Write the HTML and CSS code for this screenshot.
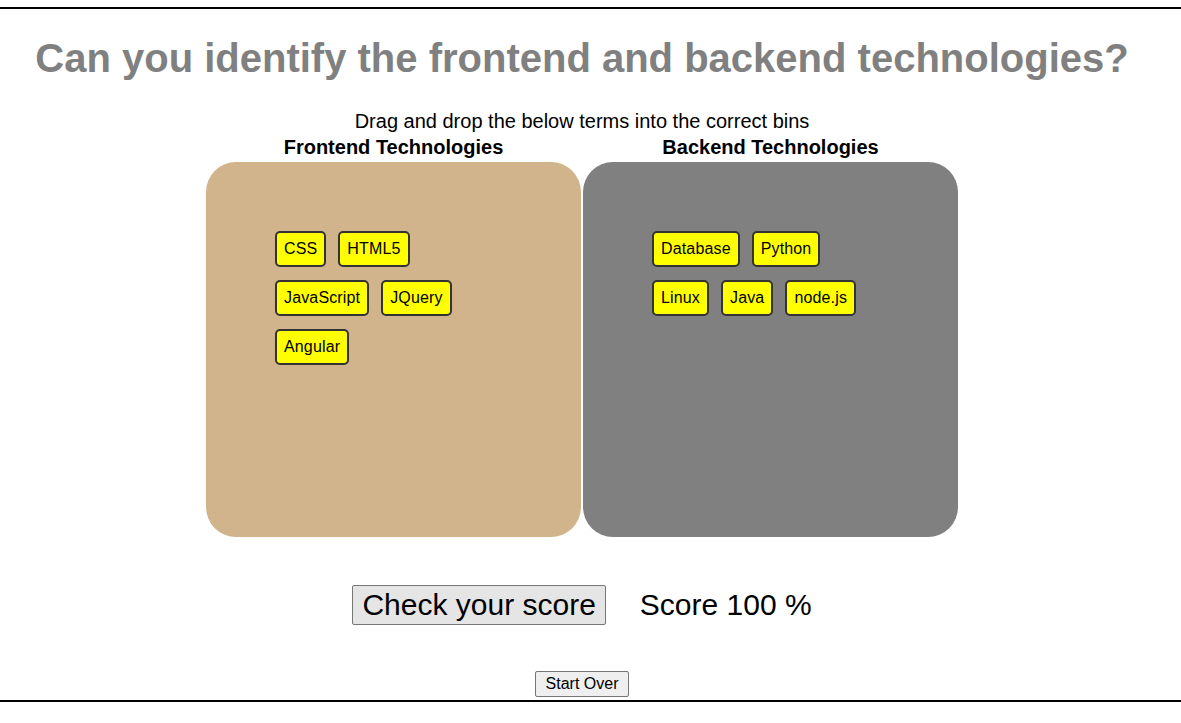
FILE: index.html
```html
<!DOCTYPE html>
<html lang="en">
<head>
<meta charset="utf-8">
<title>Frontend and Backend</title>
<link rel="stylesheet" href="styles.css">
</head>
<body>
<div class="rule rule-top"></div>
<main class="page">
  <h1 class="title">Can you identify the frontend and backend technologies?</h1>
  <p class="instructions">Drag and drop the below terms into the correct bins</p>
  <div class="bins">
    <section class="bin-col">
      <h2 class="bin-label">Frontend Technologies</h2>
      <div class="bin bin-front">
        <span class="tile">CSS</span>
        <span class="tile">HTML5</span>
        <span class="tile">JavaScript</span>
        <span class="tile">JQuery</span>
        <span class="tile">Angular</span>
      </div>
    </section>
    <section class="bin-col">
      <h2 class="bin-label">Backend Technologies</h2>
      <div class="bin bin-back">
        <span class="tile">Database</span>
        <span class="tile">Python</span>
        <span class="tile">Linux</span>
        <span class="tile">Java</span>
        <span class="tile">node.js</span>
      </div>
    </section>
  </div>
  <div class="score-row">
    <button class="check-btn" type="button">Check your score</button>
    <span class="score">Score 100 %</span>
  </div>
  <div class="restart-row">
    <button class="restart-btn" type="button">Start Over</button>
  </div>
</main>
<div class="rule rule-bottom"></div>
</body>
</html>
```

FILE: styles.css
```css
html, body {
  margin: 0;
  padding: 0;
  background: #ffffff;
}

body {
  font-family: "Liberation Sans", Arial, sans-serif;
  color: #000;
}

.rule {
  height: 2px;
  background: #000;
  width: 100%;
}

.rule-top {
  margin-top: 7px;
}

.page {
  width: 1164px;
  display: flex;
  flex-direction: column;
  align-items: center;
}

.title {
  margin: 26px 0 0;
  font-size: 40px;
  font-weight: bold;
  line-height: 46px;
  color: #808080;
  white-space: nowrap;
}

.instructions {
  margin: 29px 0 0;
  font-size: 20px;
  line-height: 23px;
}

.bins {
  display: flex;
  gap: 2px;
  margin-top: 3px;
}

.bin-col {
  display: flex;
  flex-direction: column;
  align-items: center;
}

.bin-label {
  margin: 0 0 3px;
  font-size: 20px;
  line-height: 23px;
  font-weight: bold;
}

.bin {
  width: 375px;
  height: 375px;
  box-sizing: border-box;
  border-radius: 30px;
  padding: 69px;
  display: flex;
  flex-wrap: wrap;
  align-content: flex-start;
  gap: 13px 12px;
}

.bin-front {
  background: #d2b48c;
  padding-right: 100px;
}

.bin-back {
  background: #808080;
  padding-right: 90px;
}

.tile {
  display: inline-block;
  background: #ffff00;
  border: 2px solid #333;
  border-radius: 5px;
  padding: 7px 7px;
  font-size: 16px;
  line-height: 18px;
  letter-spacing: 0.15px;
  color: #000;
}

.score-row {
  display: flex;
  align-items: center;
  gap: 34px;
  margin-top: 48px;
}

.check-btn {
  font-family: "Liberation Sans", Arial, sans-serif;
  font-size: 30px;
  line-height: 34px;
  padding: 2px 9px;
  background: #e5e5e5;
  border: 1px solid #767676;
  border-radius: 2px;
  color: #000;
  height: 40px;
}

.score {
  font-size: 30px;
  line-height: 34px;
}

.restart-row {
  margin-top: 46px;
  margin-bottom: 3px;
}

.restart-btn {
  font-family: "Liberation Sans", Arial, sans-serif;
  font-size: 16px;
  line-height: 18px;
  padding: 3px 10px;
  background: #efefef;
  border: 1px solid #767676;
  border-radius: 2px;
  color: #000;
  height: 26px;
}
```
